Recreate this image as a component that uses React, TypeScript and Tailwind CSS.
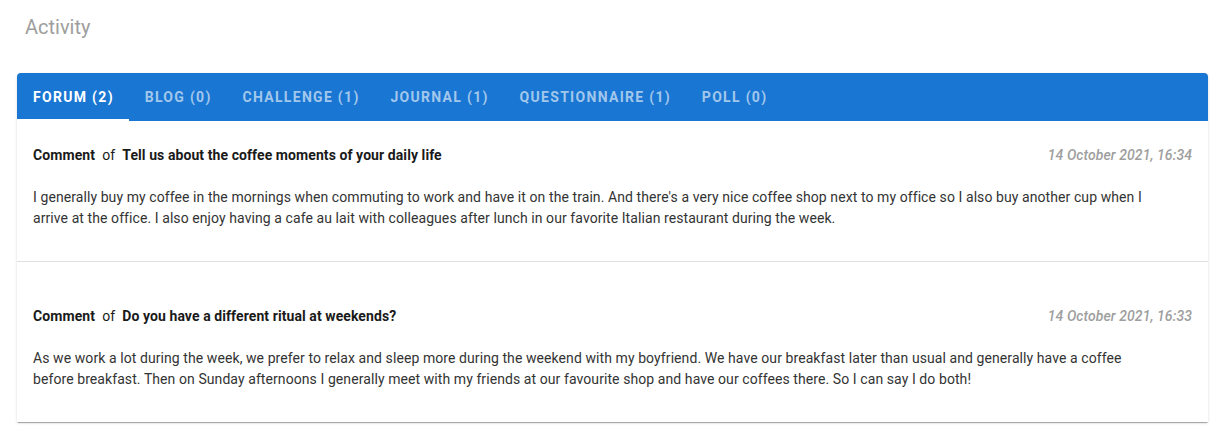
import { useState } from 'react';

const TABS = [
  { label: 'Forum', count: 2 },
  { label: 'Blog', count: 0 },
  { label: 'Challenge', count: 1 },
  { label: 'Journal', count: 1 },
  { label: 'Questionnaire', count: 1 },
  { label: 'Poll', count: 0 },
];

const COMMENTS = [
  {
    title: 'Tell us about the coffee moments of your daily life',
    date: '14 October 2021, 16:34',
    body: "I generally buy my coffee in the mornings when commuting to work and have it on the train. And there's a very nice coffee shop next to my office so I also buy another cup when I arrive at the office. I also enjoy having a cafe au lait with colleagues after lunch in our favorite Italian restaurant during the week.",
  },
  {
    title: 'Do you have a different ritual at weekends?',
    date: '14 October 2021, 16:33',
    body: 'As we work a lot during the week, we prefer to relax and sleep more during the weekend with my boyfriend. We have our breakfast later than usual and generally have a coffee before breakfast. Then on Sunday afternoons I generally meet with my friends at our favourite shop and have our coffees there. So I can say I do both!',
  },
];

export default function App() {
  const [active, setActive] = useState(0);

  return (
    <div className="min-h-[440px] bg-white pl-[17px] pr-[20px] font-['Roboto',sans-serif]">
      {/* Heading */}
      <h1 className="pl-[8px] pt-[14px] text-[20px] leading-[26px] text-[#9e9e9e]">Activity</h1>

      {/* Card */}
      <div className="mt-[33px] rounded-t-[4px] bg-white shadow-[0_2px_1px_-1px_rgba(0,0,0,0.2),0_1px_1px_0_rgba(0,0,0,0.14),0_1px_3px_0_rgba(0,0,0,0.12)]">
        {/* Tabs */}
        <div className="flex h-[48px] rounded-t-[4px] bg-[#1976d2]">
          {TABS.map((t, i) => (
            <button
              key={t.label}
              onClick={() => setActive(i)}
              className={`relative flex h-full items-center px-4 text-[14px] font-bold uppercase tracking-[1.3px] ${
                active === i ? 'text-white' : 'text-white/60'
              }`}
            >
              <span className="-mr-[1.2px]">
                {t.label} ({t.count})
              </span>
              {active === i && <span className="absolute bottom-0 left-0 h-[2px] w-full bg-white" />}
            </button>
          ))}
        </div>

        {/* Comments */}
        {COMMENTS.map((c, i) => (
          <div
            key={i}
            className={`px-4 pb-[32px] ${i === 0 ? 'pt-[24px] border-b border-[#e0e0e0]' : 'pt-[44px]'}`}
          >
            <div className="flex items-center justify-between text-[14px] leading-[20px] tracking-[0.08px]">
              <div className="text-[#1a1a1a]">
                <span className="font-bold">Comment</span>
                <span className="whitespace-pre">{'  of  '}</span>
                <span className="font-bold">{c.title}</span>
              </div>
              <span className="font-medium italic text-[#9e9e9e]">{c.date}</span>
            </div>
            <p className="mt-[22px] pr-[32px] text-[14px] leading-[21px] tracking-[0.08px] text-[#333333]">
              {c.body}
            </p>
          </div>
        ))}
      </div>
    </div>
  );
}
